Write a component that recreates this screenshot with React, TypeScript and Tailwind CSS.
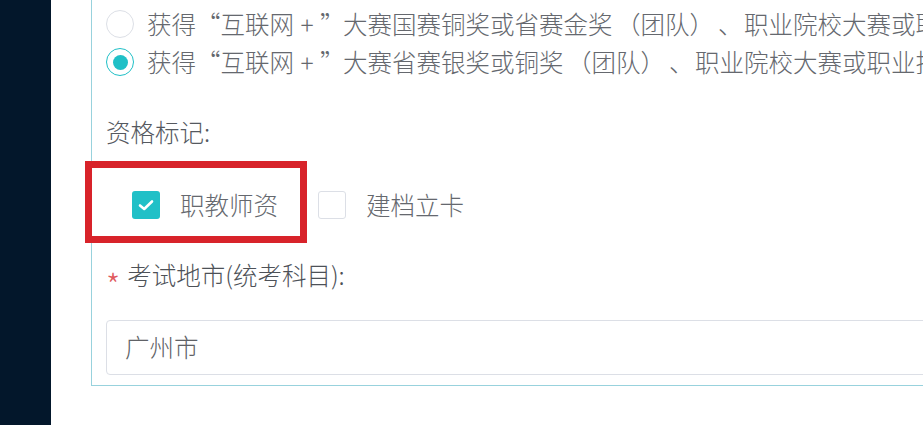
import React from "react";

const font = { fontFamily: '"Noto Sans CJK SC", "Noto Sans", sans-serif' };

function Radio({ checked }: { checked?: boolean }) {
  return checked ? (
    <span className="flex h-[28px] w-[28px] shrink-0 items-center justify-center rounded-full border border-[#20c0c7] bg-white">
      <span className="h-[15px] w-[15px] rounded-full bg-[#20c0c7]" />
    </span>
  ) : (
    <span className="h-[28px] w-[28px] shrink-0 rounded-full border border-[#dcdfe6] bg-white" />
  );
}

function Check({ checked }: { checked?: boolean }) {
  return checked ? (
    <span className="flex h-[28px] w-[28px] shrink-0 items-center justify-center rounded-[3px] bg-[#20c0c7]">
      <svg width="18" height="14" viewBox="0 0 18 14" fill="none">
        <path d="M3 7.5 L7.2 11 L15 3.5" stroke="white" strokeWidth="2.6" strokeLinecap="round" strokeLinejoin="round" />
      </svg>
    </span>
  ) : (
    <span className="h-[28px] w-[28px] shrink-0 rounded-[3px] border border-[#dcdfe6] bg-white" />
  );
}

function Line({ mid, rest }: { mid: string; rest: string }) {
  return (
    <span className="flex items-center">
      <span>获得</span>
      <span className="inline-block w-[24.5px] pr-[2px] text-right">“</span>
      <span>互联网</span>
      <span className="inline-block w-[26px] text-center">+</span>
      <span className="inline-block w-[23px] text-left">”</span>
      <span>{mid}</span>
      <span className="inline-block w-[28px] text-right">（</span>
      <span>团队</span>
      <span className="inline-block w-[24.5px] text-left">）</span>
      <span className="inline-block w-[30px] pl-[4px] text-left">、</span>
      <span>{rest}</span>
    </span>
  );
}

const rows = [
  { mid: "大赛国赛银奖", rest: "职业院校大赛或职业技能大赛国赛二等奖", checked: false },
  { mid: "大赛国赛铜奖或省赛金奖", rest: "职业院校大赛或职业技能大赛", checked: false },
  { mid: "大赛省赛银奖或铜奖", rest: "职业院校大赛或职业技能大赛", checked: true },
];

export default function App() {
  return (
    <div className="relative flex h-[425px] w-full overflow-hidden bg-white" style={font}>
      <div className="w-[51px] shrink-0 bg-[#03172b]" />
      <div className="min-w-0 flex-1 overflow-hidden pl-[40px]">
        <div className="w-[1100px] border-b border-l border-[#98d2dd] pb-[10px] pl-[14px]">
          <div className="mt-[-33px] flex flex-col">
            {rows.map((r, i) => (
              <div key={i} className="flex h-[38px] items-center gap-[13px] whitespace-nowrap text-[24.5px] font-light text-[#65686e]">
                <Radio checked={r.checked} />
                <Line mid={r.mid} rest={r.rest} />
              </div>
            ))}
          </div>
          <div className="mt-[35px] flex h-[32px] items-center text-[24.5px] font-light text-[#55595f]">资格标记:</div>
          <div className="mt-[37px] flex h-[40px] items-center pl-[26px] text-[24.5px] font-light text-[#65686e]">
            <Check checked />
            <span className="ml-[20px]">职教师资</span>
            <span className="ml-[40px] flex">
              <Check />
            </span>
            <span className="ml-[20px]">建档立卡</span>
          </div>
          <div className="mt-[34px] flex h-[32px] items-center text-[24.5px] font-light text-[#4d5157]">
            <span className="mr-[7px] mt-[17px] text-[32px] leading-none text-[#e05a5d]">*</span>
            <span>考试地市(统考科目):</span>
          </div>
          <div className="mt-[29px] flex h-[55px] items-center rounded-[4px] border border-[#dcdfe6] pl-[18px] text-[24.5px] font-light text-[#606266]">
            广州市
          </div>
        </div>
      </div>
      <div className="pointer-events-none absolute left-[85px] top-[161px] h-[82px] w-[222px] border-[7px] border-[#d8232a]" />
    </div>
  );
}
